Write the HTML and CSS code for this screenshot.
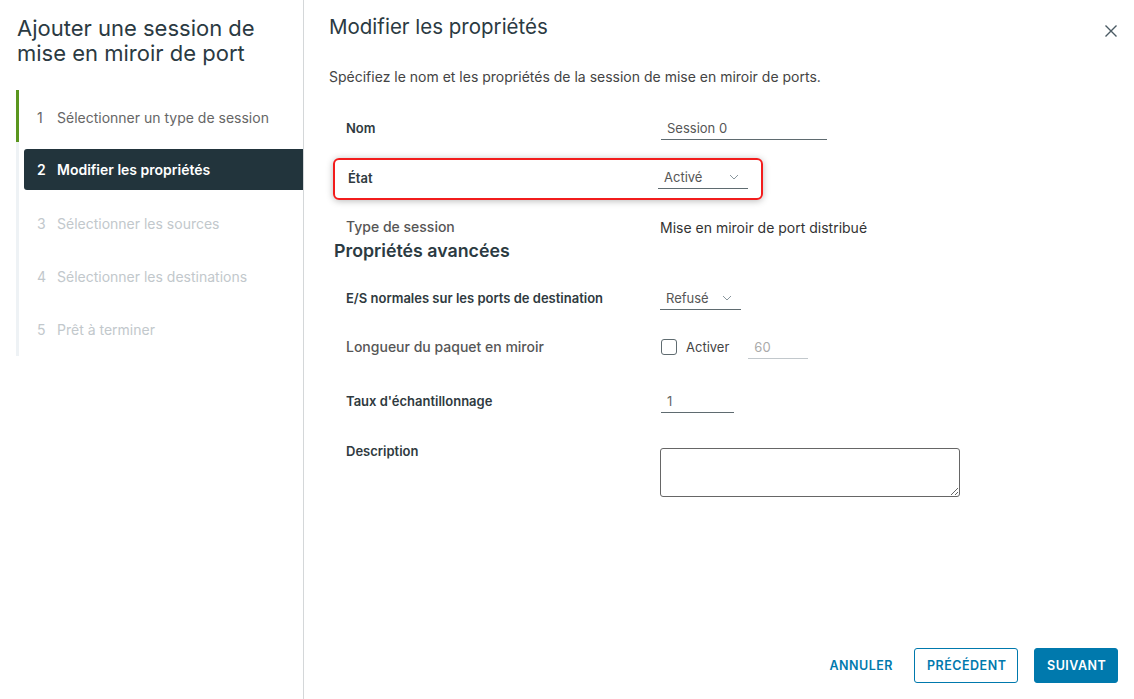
FILE: index.html
```html
<!DOCTYPE html>
<html lang="fr">
<head>
<meta charset="utf-8">
<title>Ajouter une session de mise en miroir de port</title>
<link rel="stylesheet" href="styles.css">
</head>
<body>
<div class="wizard">
  <aside class="side">
    <h1 class="side-title">Ajouter une session de mise en miroir de port</h1>
    <ol class="steps">
      <li class="step done"><span class="num">1</span><span>Sélectionner un type de session</span></li>
      <li class="step active"><span class="num">2</span><span>Modifier les propriétés</span></li>
      <li class="step todo"><span class="num">3</span><span>Sélectionner les sources</span></li>
      <li class="step todo"><span class="num">4</span><span>Sélectionner les destinations</span></li>
      <li class="step todo"><span class="num">5</span><span>Prêt à terminer</span></li>
    </ol>
  </aside>
  <main class="content">
    <header class="content-head">
      <h2 class="content-title">Modifier les propriétés</h2>
      <button class="close" aria-label="Fermer">
        <svg width="14" height="14" viewBox="0 0 14 14"><path d="M1.5 1.5 L12.5 12.5 M12.5 1.5 L1.5 12.5" stroke="#4a5a63" stroke-width="1.4" fill="none"/></svg>
      </button>
    </header>
    <p class="intro">Spécifiez le nom et les propriétés de la session de mise en miroir de ports.</p>

    <div class="form">
      <div class="row row-nom">
        <label class="lbl bold">Nom</label>
        <div class="field"><span class="input w-nom">Session 0</span></div>
      </div>
      <div class="row row-etat highlight">
        <label class="lbl bold">État</label>
        <div class="field"><span class="select w-etat">Activé<svg class="chev" width="10" height="6" viewBox="0 0 10 6"><path d="M1 1 L5 5 L9 1" stroke="#8a979e" stroke-width="1" fill="none"/></svg></span></div>
      </div>
      <div class="row row-type">
        <label class="lbl plain">Type de session</label>
        <div class="field value">Mise en miroir de port distribué</div>
      </div>
      <h3 class="section">Propriétés avancées</h3>
      <div class="row row-es">
        <label class="lbl bold">E/S normales sur les ports de destination</label>
        <div class="field"><span class="select w-es">Refusé<svg class="chev" width="10" height="6" viewBox="0 0 10 6"><path d="M1 1 L5 5 L9 1" stroke="#8a979e" stroke-width="1" fill="none"/></svg></span></div>
      </div>
      <div class="row row-long">
        <label class="lbl plain">Longueur du paquet en miroir</label>
        <div class="field check-field">
          <span class="checkbox"></span><span class="check-lbl">Activer</span>
          <span class="input disabled w-len">60</span>
        </div>
      </div>
      <div class="row row-taux">
        <label class="lbl bold">Taux d'échantillonnage</label>
        <div class="field"><span class="input w-taux">1</span></div>
      </div>
      <div class="row row-desc">
        <label class="lbl bold">Description</label>
        <div class="field"><textarea class="textarea"></textarea></div>
      </div>
    </div>

    <footer class="actions">
      <button class="btn link">ANNULER</button>
      <button class="btn outline">PRÉCÉDENT</button>
      <button class="btn primary">SUIVANT</button>
    </footer>
  </main>
</div>
</body>
</html>
```
FILE: styles.css
```css
* { box-sizing: border-box; }
html, body { margin: 0; padding: 0; }
body {
  width: 1134px;
  height: 699px;
  overflow: hidden;
  background: #fff;
  font-family: "Inter", "Noto Sans", sans-serif;
  color: #333;
}
.wizard {
  display: flex;
  height: 699px;
}
.side {
  width: 304px;
  flex: none;
  border-right: 1px solid #d4d7d9;
  padding: 16px 0 0 16px;
}
.side-title {
  width: 262px;
  margin: 0 0 0 1px;
  font-size: 22px;
  font-weight: 400;
  line-height: 25px;
  color: #2b3a42;
}
.steps {
  list-style: none;
  margin: 24px 0 0 0;
  padding: 0;
  border-left: 3px solid #eef2f5;
}
.step {
  display: flex;
  align-items: center;
  height: 53px;
  font-size: 14px;
  color: #666;
  padding-left: 18px;
}
.step .num { width: 20px; }
.step.done {
  border-left: 3px solid #5a961e;
  margin-left: -3px;
  height: 52px;
  padding: 2px 0 0 18px;
}
.step.active {
  height: 41px;
  margin: 7px 0 7px 5px;
  padding-left: 13px;
  background: #22343c;
  color: #fff;
  font-weight: 600;
  border-radius: 3px 0 0 3px;
}
.step.todo { color: #c2c8cc; }

.content {
  flex: 1;
  position: relative;
  padding: 0 0 0 25px;
}
.content-head {
  display: flex;
  justify-content: space-between;
  align-items: flex-start;
  height: 66px;
}
.content-title {
  margin: 15px 0 0 0;
  font-size: 20.5px;
  line-height: 24px;
  font-weight: 400;
  color: #2b3a42;
}
.close {
  margin: 24px 16px 0 0;
  border: 0;
  background: none;
  padding: 0;
  width: 14px;
  height: 14px;
  display: flex;
}
.intro {
  margin: 0;
  font-size: 14px;
  line-height: 22px;
  color: #444;
}
.form {
  margin-top: 25px;
  display: flex;
  flex-direction: column;
}
.row {
  display: grid;
  grid-template-columns: 314px 1fr;
  align-items: center;
  height: 30px;
  padding-left: 17px;
}
.lbl {
  font-size: 13px;
  line-height: 18px;
}
.lbl.bold { font-weight: 600; color: #2f3a40; }
.lbl.plain { font-size: 14px; color: #565656; font-weight: 500; }
.field { font-size: 13px; color: #444; }
.value { font-size: 14px; color: #333; }
.input, .select {
  display: inline-flex;
  align-items: center;
  justify-content: space-between;
  height: 23px;
  padding: 0 6px;
  border-bottom: 1px solid #5f6b70;
  color: #565656;
  font-size: 13px;
  line-height: 18px;
}
.w-nom { width: 166px; margin-left: 1px; }
.w-etat { width: 90px; }
.w-es { width: 81px; }
.w-taux { width: 73px; margin-left: 1px; color: #666; }
.w-len { width: 60px; margin-left: 19px; color: #aaa; border-bottom-color: #c2c8cc; }
.chev { margin-left: 6px; margin-right: 3px; }

.highlight {
  margin-top: 15px;
  margin-left: 4px;
  width: 430px;
  height: 42px;
  padding: 6px 0 10px 13px;
  border: 2px solid #f21c1c;
  border-radius: 6px;
  box-shadow: 0 1px 7px rgba(0,0,0,0.28);
}
.row-etat .field { margin-left: -4px; }
.row-type { margin-top: 17px; height: 20px; }
.section {
  margin: 2px 0 0 5px;
  font-size: 17.8px;
  font-weight: 600;
  line-height: 24px;
  color: #2b3a42;
}
.row-es { margin-top: 20px; }
.row-long { margin-top: 19px; }
.check-field { display: flex; align-items: center; }
.checkbox {
  width: 16px; height: 16px;
  border: 1px solid #5f6b70;
  border-radius: 3px;
  margin-left: 1px;
}
.check-lbl { margin-left: 9px; font-size: 13px; color: #444; }
.row-taux { margin-top: 24px; }
.row-desc { margin-top: 32px; align-items: start; height: auto; }
.row-desc .lbl { margin-top: -6px; }
.textarea {
  display: block;
  width: 300px;
  height: 49px;
  border: 1px solid #666;
  border-radius: 3px;
  margin: 0;
  resize: both;
  font-family: inherit;
}

.actions {
  position: absolute;
  right: 16px;
  bottom: 16px;
  display: flex;
  gap: 16px;
  align-items: center;
}
.btn {
  font-family: inherit;
  font-size: 12.5px;
  font-weight: 600;
  letter-spacing: 0.5px;
  height: 35px;
  border-radius: 3px;
  padding: 0 12px;
  cursor: pointer;
}
.btn.link { background: none; border: 0; color: #0079ad; margin-right: -7px; }
.btn.outline { background: #fff; border: 1px solid #0079ad; color: #0079ad; width: 104px; }
.btn.primary { background: #0079ad; border: 1px solid #0079ad; color: #fff; width: 84px; }
```
